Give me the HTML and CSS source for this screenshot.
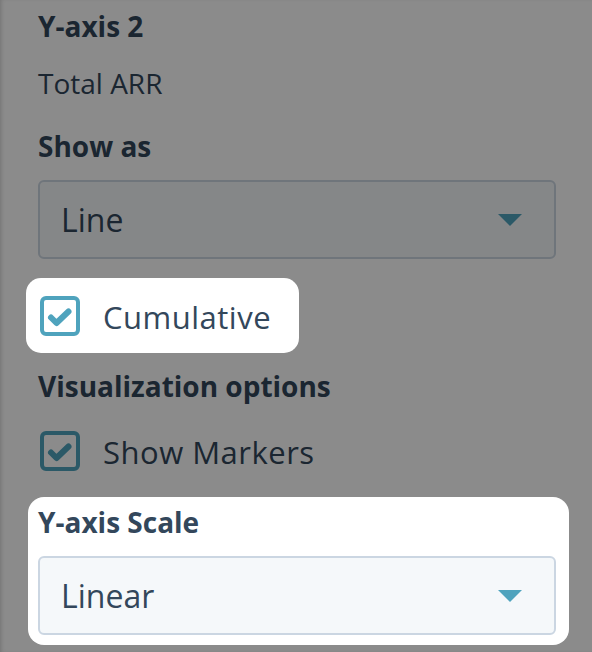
FILE: index.html
```html
<!DOCTYPE html>
<html lang="en">
<head>
<meta charset="utf-8">
<title>Chart settings</title>
<link rel="stylesheet" href="styles.css">
</head>
<body>
<div class="panel">
  <div class="field-title">Y-axis 2</div>
  <div class="field-value">Total ARR</div>

  <div class="field-title gap-lg">Show as</div>
  <div class="select">
    <span class="select-text">Line</span>
    <svg class="caret" width="24" height="12" viewBox="0 0 24 12" aria-hidden="true"><polygon points="0,0 24,0 12,12"/></svg>
  </div>

  <label class="spot spot-check">
    <svg class="checkbox" width="40" height="40" viewBox="0 0 40 40" aria-hidden="true">
      <rect x="2" y="2" width="36" height="36" rx="4"/>
      <polyline points="11,21.5 16.5,27 28.5,15.5"/>
    </svg>
    <span class="check-label">Cumulative</span>
  </label>

  <div class="field-title vis-title">Visualization options</div>
  <label class="check-row">
    <svg class="checkbox" width="40" height="40" viewBox="0 0 40 40" aria-hidden="true">
      <rect x="2" y="2" width="36" height="36" rx="4"/>
      <polyline points="11,21.5 16.5,27 28.5,15.5"/>
    </svg>
    <span class="check-label">Show Markers</span>
  </label>

  <div class="spot spot-scale">
    <div class="field-title">Y-axis Scale</div>
    <div class="select">
      <span class="select-text">Linear</span>
      <svg class="caret" width="24" height="12" viewBox="0 0 24 12" aria-hidden="true"><polygon points="0,0 24,0 12,12"/></svg>
    </div>
  </div>
</div>

<!-- dimming layer; .spot elements sit above it -->
<div class="scrim"></div>
</body>
</html>
```

FILE: styles.css
```css
* {
  box-sizing: border-box;
}

html, body {
  margin: 0;
  height: 100%;
}

body {
  background: #fff;
  font-family: "Open Sans", "Liberation Sans", sans-serif;
  color: #33475b;
  box-shadow: inset 3px 0 4px -2px rgba(0, 0, 0, 0.18);
  overflow: hidden;
}

.panel {
  padding: 6px 36px 0 38px;
}

.field-title {
  font-size: 28px;
  font-weight: 700;
  line-height: 40px;
}

.field-value {
  margin-top: 17px;
  font-size: 28px;
  line-height: 40px;
}

.gap-lg {
  margin-top: 23px;
}

.select {
  margin-top: 14px;
  height: 79px;
  display: flex;
  align-items: center;
  justify-content: space-between;
  padding: 0 32px 0 21px;
  background: #f5f8fa;
  border: 2px solid #cbd6e2;
  border-radius: 6px;
}

.select-text {
  font-size: 32px;
  line-height: 44px;
}

.caret {
  display: block;
  fill: #4fa3bd;
}

.checkbox {
  display: block;
  flex: none;
}

.checkbox rect {
  fill: #fff;
  stroke: #4fa3bd;
  stroke-width: 4;
}

.checkbox polyline {
  fill: none;
  stroke: #4fa3bd;
  stroke-width: 6;
  stroke-linecap: round;
  stroke-linejoin: round;
}

.check-label {
  margin-left: 23px;
  padding-top: 2px;
  font-size: 31px;
  line-height: 38px;
  letter-spacing: 0.5px;
}

.check-row {
  display: flex;
  align-items: flex-start;
  height: 40px;
  margin: 25px 0 0 2px;
}

.vis-title {
  margin-top: 13px;
}

/* highlighted regions that stay bright above the scrim */
.spot {
  position: relative;
  z-index: 2;
  background: #fff;
  border-radius: 15px;
}

.spot-check {
  display: flex;
  align-items: flex-start;
  width: 273px;
  height: 75px;
  margin: 19px 0 0 -12px;
  padding: 18px 0 0 14px;
}

.spot-scale {
  margin: 26px -13px 0 -10px;
  padding: 5px 13px 10px 10px;
  border-radius: 16px;
}

.scrim {
  position: fixed;
  inset: 0;
  z-index: 1;
  background: rgba(0, 0, 0, 0.455);
}
```
